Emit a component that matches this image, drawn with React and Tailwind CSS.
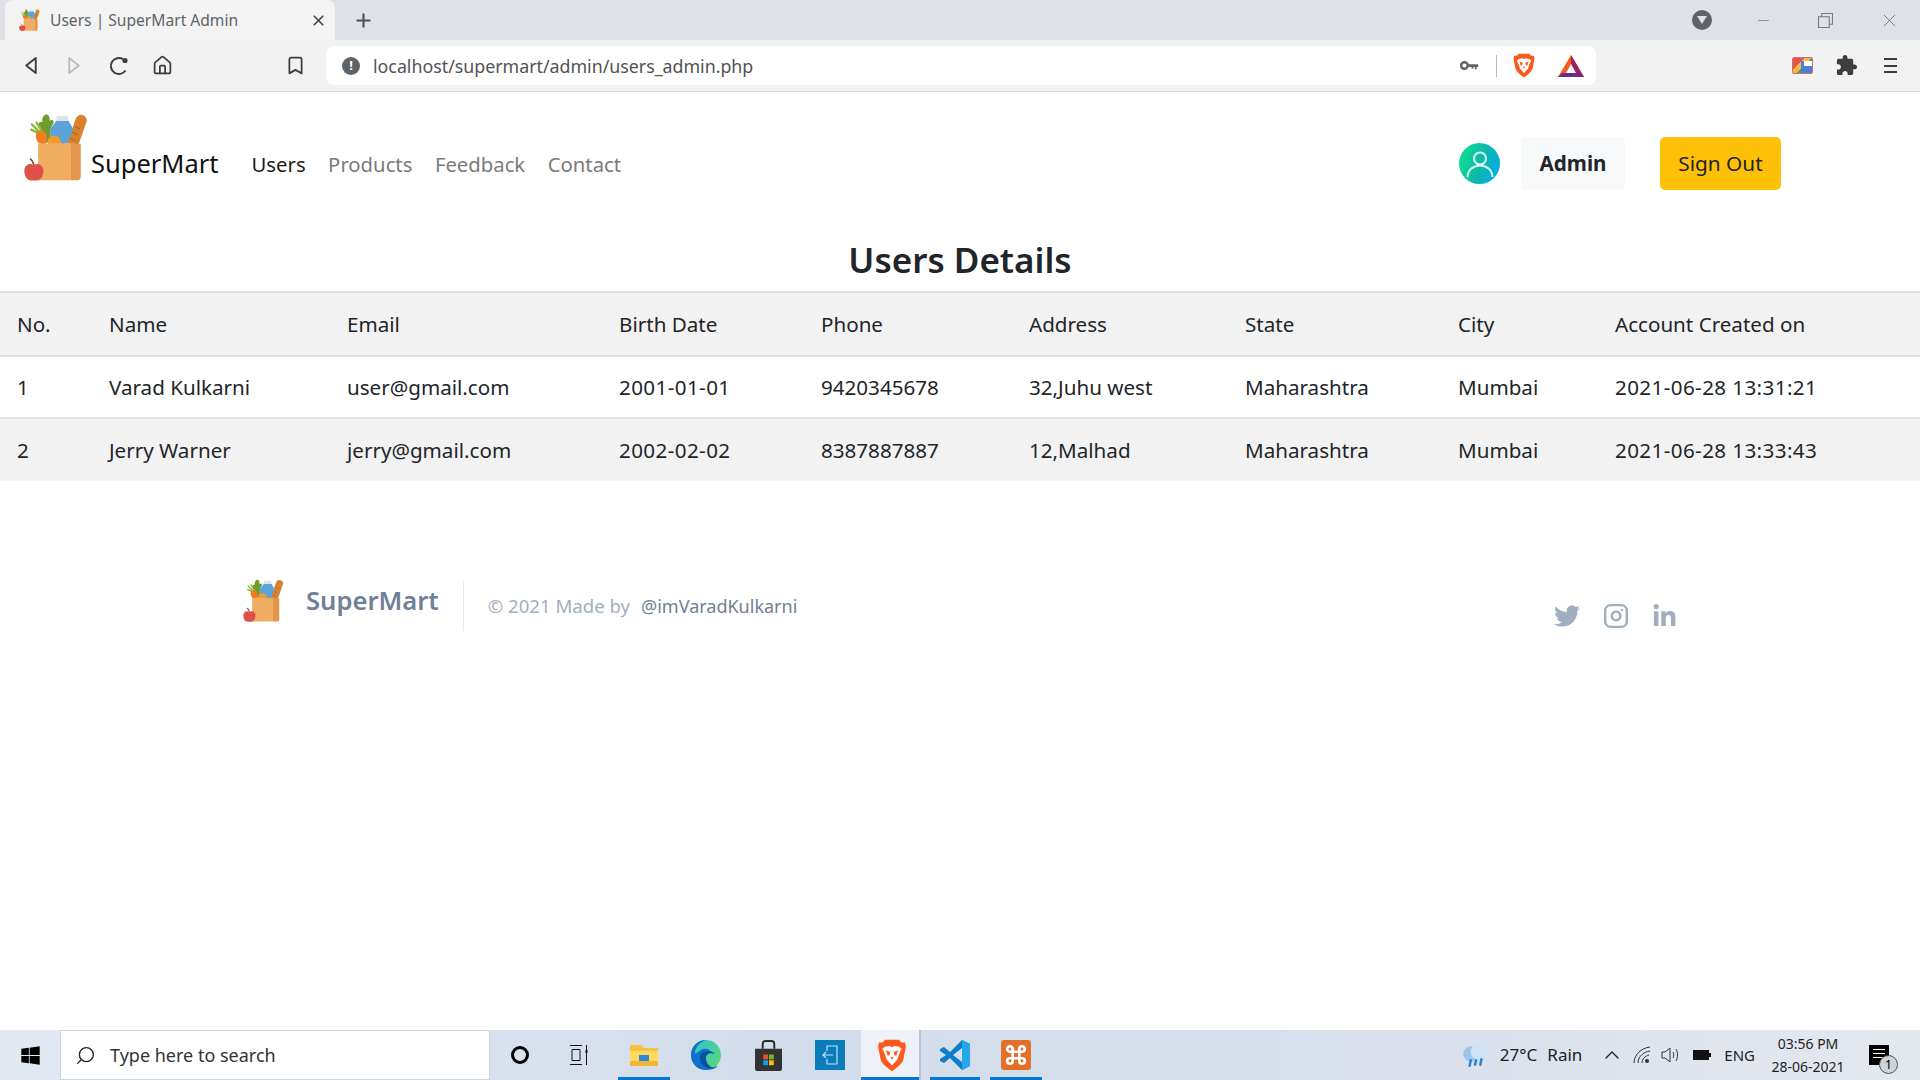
import { House, Bookmark, Search, ChevronUp, X, Plus, Minus } from 'lucide-react';
import { FaTwitter, FaLinkedinIn, FaWindows } from 'react-icons/fa';
import { FiInstagram } from 'react-icons/fi';

const users = [
  ['1', 'Varad Kulkarni', 'user@gmail.com', '2001-01-01', '9420345678', '32,Juhu west', 'Maharashtra', 'Mumbai', '2021-06-28 13:31:21'],
  ['2', 'Jerry Warner', 'jerry@gmail.com', '2002-02-02', '8387887887', '12,Malhad', 'Maharashtra', 'Mumbai', '2021-06-28 13:33:43'],
];
const headers = ['No.', 'Name', 'Email', 'Birth Date', 'Phone', 'Address', 'State', 'City', 'Account Created on'];
const colWidths = ['w-[92px]', 'w-[238px]', 'w-[272px]', 'w-[202px]', 'w-[208px]', 'w-[216px]', 'w-[213px]', 'w-[157px]', 'w-[322px]'];

// grocery bag logo, drawn from the 3x crop
function Logo({ className }) {
  return (
    <svg viewBox="42 38 195 206" className={className}>
      <path d="M192 128 L216 60" stroke="#d8822e" strokeWidth="34" strokeLinecap="round" />
      <path d="M196 78l16 8M189 96l16 8M182 114l14 7" stroke="#bb6a1f" strokeWidth="4" />
      <path d="M140 62 L142 46 L176 46 L178 62 Z" fill="#dfe3e8" />
      <path d="M122 86 L140 62 L178 62 L192 86 L172 136 L122 136 Z" fill="#5ba4da" />
      <path d="M108 42 C118 40 122 52 120 62 C130 54 136 64 130 72 C126 80 122 84 122 92 L122 132 L104 122 C104 104 98 94 90 84 C82 72 88 62 98 66 C96 56 100 44 108 42 Z" fill="#6f9c30" />
      <path d="M66 72 L92 98 M80 66 L96 92 M64 88 L88 100" stroke="#8cb63c" strokeWidth="7" strokeLinecap="round" />
      <path d="M78 104 C82 88 102 88 108 100 C114 112 112 126 110 136 L92 136 C84 126 76 116 78 104 Z" fill="#f47a23" />
      <circle cx="134" cy="126" r="20" fill="#f59a2c" />
      <path d="M85 132 q8 -8 15 0 q8 -8 15 0 q8 -8 15 0 q8 -8 15 0 q8 -8 15 0 q8 -8 15 0 q4 -4 10 -4 L185 242 L85 242 Z" fill="#efad62" />
      <path d="M185 128 q8 -2 15 4 q8 -4 15 0 L215 232 Q215 242 205 242 L185 242 Z" fill="#e2954b" />
      <path d="M72 196 C70 188 68 182 62 178" stroke="#8a4b22" strokeWidth="5" fill="none" strokeLinecap="round" />
      <path d="M72 196 C84 188 100 194 101 212 C102 230 92 243 80 243 L64 243 C52 243 42 230 43 212 C44 194 60 188 72 196 Z" fill="#df5148" />
    </svg>
  );
}

function BraveLogo({ className, face = '#fff' }) {
  return (
    <svg viewBox="0 0 32 38" className={className}>
      <path d="M8 1 L24 1 L27 4 L31 4 L32 9 L29 24 C28 28 20 35 16 37 C12 35 4 28 3 24 L0 9 L1 4 L5 4 Z" fill="#fb5a1c" />
      <path d="M8 9 L13 8 L16 9.5 L19 8 L24 9 L27 11 L24 18 L22 24 L19 27 L16.5 30 L15.5 30 L13 27 L10 24 L8 18 L5 11 Z" fill={face} />
      <path d="M9 13 L14 15 L13 19 L11 19 Z M23 13 L18 15 L19 19 L21 19 Z M14 21 L18 21 L16 24 Z" fill="#fb5a1c" />
    </svg>
  );
}

function Tab() {
  return (
    <div className="ml-[5px] flex h-10 w-[330px] items-center rounded-t-lg bg-[#f3f3f3] pl-[14px] pr-2">
      <Logo className="h-[22px] w-[21px] shrink-0" />
      <span className="ml-[10px] mt-px flex-1 text-[15.6px] text-[#5f6368]">Users | SuperMart Admin</span>
      <X size={17} strokeWidth={2.4} className="text-[#45484c]" />
    </div>
  );
}

function TitleBar() {
  return (
    <div className="flex h-10 items-center bg-[#dee1e6]">
      <Tab />
      <Plus size={21} strokeWidth={2.4} className="ml-[18px] text-[#4d5054]" />
      <div className="flex-1" />
      <div className="flex h-5 w-5 items-center justify-center rounded-full bg-[#5f6368]">
        <svg viewBox="0 0 10 8" className="h-2 w-2.5"><path d="M0 0H10L5 8Z" fill="#dee1e6" /></svg>
      </div>
      <Minus size={17} strokeWidth={1} className="ml-[43px] text-[#6a6d70]" />
      <svg viewBox="0 0 14 14" className="ml-[46px] h-[15px] w-[15px]" fill="none" stroke="#77797c">
        <path d="M.5 3.5h10v10H.5zM3.5 3.5v-3h10v10h-3" />
      </svg>
      <X size={21} strokeWidth={1} className="ml-[46px] mr-[20px] text-[#6a6d70]" />
    </div>
  );
}

function Toolbar() {
  return (
    <div className="flex h-[52px] items-center border-b border-[#d3d3d3] bg-[#f2f2f2]">
      <svg viewBox="0 0 14 20" className="ml-6 h-[19px] w-[14px]" fill="none" stroke="#3d3d3d" strokeWidth="2" strokeLinejoin="round">
        <path d="M12 2 L2 10 L12 18 Z" />
      </svg>
      <svg viewBox="0 0 14 20" className="ml-[29px] h-[19px] w-[14px]" fill="none" stroke="#bdbdbd" strokeWidth="2" strokeLinejoin="round">
        <path d="M2 2 L12 10 L2 18 Z" />
      </svg>
      <svg viewBox="0 0 20 20" className="ml-[28px] h-5 w-5" fill="none" stroke="#3d3d3d" strokeWidth="2">
        <path d="M16.5 14.5 A8 8 0 1 1 14 3.2" />
        <circle cx="16" cy="4.5" r="2.6" fill="#3d3d3d" stroke="none" />
      </svg>
      <House size={21} strokeWidth={2} className="ml-[23px] text-[#3d3d3d]" />
      <Bookmark size={21} strokeWidth={2} className="ml-[112px] text-[#3d3d3d]" />
      <div className="ml-5 flex h-[39px] w-[1270px] items-center rounded-lg bg-white pl-4 pr-3">
        <div className="flex h-[18px] w-[18px] items-center justify-center rounded-full bg-[#5f6368] text-[13px] font-bold leading-none text-white">!</div>
        <span className="ml-[13px] mt-px flex-1 text-[17.8px] text-[#4f5357]">localhost/supermart/admin/users_admin.php</span>
        <svg viewBox="0 0 20 12" className="h-[11px] w-5">
          <circle cx="5" cy="6" r="3.6" fill="none" stroke="#5f6368" strokeWidth="2.6" />
          <path d="M8 4.6h12v3h-1.6v2.6h-2V7.6h-1.6v2h-2v-2H8z" fill="#5f6368" />
        </svg>
        <div className="ml-[17px] h-[22px] w-px bg-[#b9b9b9]" />
        <BraveLogo className="ml-[16px] h-[25px] w-[22px]" />
        <svg viewBox="0 0 26 22" className="ml-[23px] h-[22px] w-[26px]">
          <path d="M13 0 L26 22 H0 Z" fill="#fb5a1c" />
          <path d="M13 0 L26 22 H17 L13 14 Z" fill="#9e1f63" />
          <path d="M0 22 L4 18 H22 L26 22 Z" fill="#662d91" />
          <path d="M13 9 L18 18 H8 Z" fill="#fff" />
        </svg>
      </div>
      <div className="ml-[196px] h-[17px] w-[21px] overflow-hidden rounded-[2px] border border-[#d86b6b] bg-[linear-gradient(135deg,#e0574f_35%,#f2bd42_35%,#f2bd42_55%,#4aa564_55%)]">
        <div className="ml-2 mt-[3px] h-3 w-4 bg-[#4a7fd6]">
          <div className="ml-[3px] mt-[3px] h-[5px] w-2 bg-white" />
        </div>
      </div>
      <svg viewBox="0 0 24 24" className="ml-[22px] h-[23px] w-[23px]" fill="#3d3d3d">
        <path d="M20.5 11H19V7c0-1.1-.9-2-2-2h-4V3.5C13 2.12 11.88 1 10.5 1S8 2.12 8 3.5V5H4c-1.1 0-1.99.9-1.99 2v3.8H3.5c1.49 0 2.7 1.21 2.7 2.7s-1.21 2.7-2.7 2.7H2V20c0 1.1.9 2 2 2h3.8v-1.5c0-1.49 1.21-2.7 2.7-2.7 1.49 0 2.7 1.21 2.7 2.7V22H17c1.1 0 2-.9 2-2v-4h1.5c1.38 0 2.5-1.12 2.5-2.5S21.88 11 20.5 11z" />
      </svg>
      <div className="ml-[26px] flex h-[15px] w-[13px] flex-col justify-between">
        <div className="h-0.5 bg-[#3d3d3d]" />
        <div className="h-0.5 bg-[#3d3d3d]" />
        <div className="h-0.5 bg-[#3d3d3d]" />
      </div>
    </div>
  );
}

function Navbar() {
  return (
    <nav className="flex h-[142px] items-start pl-6">
      <Logo className="mt-[20px] h-[70px] w-[64px] shrink-0" />
      <span className="ml-[3px] mt-[51px] text-[25.5px] leading-[40px] text-[#111]">SuperMart</span>
      <div className="ml-[33px] mt-[53px] flex gap-[22.5px] text-[20.3px] leading-[38px] text-[#7b7b7b]">
        <a className="text-[#1c1c1c]">Users</a>
        <a>Products</a>
        <a>Feedback</a>
        <a>Contact</a>
      </div>
      <div className="flex-1" />
      <div className="mt-[45px] flex items-center">
        <div className="flex h-[41px] w-[41px] items-center justify-center rounded-full bg-[linear-gradient(110deg,#0aea8a,#0fb8a8_50%,#00a8f5)]">
          <svg viewBox="0 0 28 28" className="h-7 w-7" fill="none" stroke="#d8fbf3" strokeWidth="2">
            <circle cx="14" cy="8.5" r="6" />
            <path d="M1.5 27 C2 19 8 15.5 14 15.5 C20 15.5 26 19 26.5 27" />
          </svg>
        </div>
        <button className="ml-[21px] h-[53px] w-[104px] rounded-[5px] bg-[#f8f9fa] text-[20.6px] font-bold text-[#212529]">Admin</button>
        <button className="ml-[35px] mr-[139px] h-[53px] w-[121px] rounded-[5px] bg-[#ffc107] text-[20.8px] text-[#212529]">Sign Out</button>
      </div>
    </nav>
  );
}

function UsersTable() {
  return (
    <table className="w-full table-fixed border-collapse text-[20.6px] text-[#212529]">
      <colgroup>
        {colWidths.map((w) => <col key={w} className={w} />)}
      </colgroup>
      <thead>
        <tr className="h-[64px] border-y-2 border-[#e2e3e8] bg-[#f2f2f2]">
          {headers.map((h) => <th key={h} className="pl-[17px] text-left font-normal">{h}</th>)}
        </tr>
      </thead>
      <tbody>
        {users.map((row, i) => (
          <tr key={row[0]} className={i % 2 ? 'h-[63px] bg-[#f2f2f2]' : 'h-[62px] border-b-2 border-[#e2e3e8]'}>
            {row.map((c, j) => <td key={j} className={j === 3 || j === 8 ? 'pl-[17px] tracking-[0.4px]' : 'pl-[17px]'}>{c}</td>)}
          </tr>
        ))}
      </tbody>
    </table>
  );
}

function Footer() {
  return (
    <footer className="mt-[97px] flex items-start pl-[243px]">
      <Logo className="mt-px h-[43px] w-[41px] shrink-0" />
      <span className="ml-[22px] mt-[4px] text-[25.6px] font-semibold leading-[38px] text-[#718096]">SuperMart</span>
      <div className="ml-6 mt-[3px] h-[50px] w-px bg-[#e2e8f0]" />
      <span className="ml-6 mt-[16px] text-[18.6px] leading-[24px] text-[#a0aec0]">© 2021 Made by</span>
      <span className="ml-[11px] mt-[16px] text-[18px] leading-[24px] text-[#718096]">@imVaradKulkarni</span>
      <div className="flex-1" />
      <div className="mr-[243px] mt-[25px] flex items-center gap-[23px] text-[#a0aec0]">
        <FaTwitter size={26} />
        <FiInstagram size={26} strokeWidth={2.2} />
        <FaLinkedinIn size={25} />
      </div>
    </footer>
  );
}

function TaskbarApp({ children, active, lit, width = 'w-[62px]' }) {
  return (
    <div className={`relative flex h-full ${width} items-center justify-center ${lit ? 'bg-[#eef1f8] pl-1' : ''}`}>
      {children}
      {active && <div className={`absolute bottom-0 h-[3px] bg-[#0078d7] ${lit ? 'inset-x-0' : 'inset-x-[5px]'}`} />}
    </div>
  );
}

function Taskbar() {
  return (
    <div className="flex h-[50px] shrink-0 items-center bg-[linear-gradient(90deg,#e3e9f3,#d3dcea_40%,#d6deeb_65%,#e4e8ef)]">
      <div className="flex w-[60px] justify-center"><FaWindows size={21} className="text-black" /></div>
      <div className="flex h-full w-[430px] items-center border border-[#cfd4da] bg-white pl-[14px]">
        <Search size={21} strokeWidth={1.5} className="-scale-x-100 text-[#222]" />
        <span className="ml-[14px] text-[18px] text-[#333]">Type here to search</span>
      </div>
      <div className="ml-[21px] h-[18px] w-[18px] rounded-full border-[3px] border-black" />
      <svg viewBox="0 0 20 22" className="ml-[40px] h-[22px] w-5" fill="none" stroke="#111" strokeWidth="1">
        <path d="M1 1.5h12M3 5.5h8v11H3zM1 20.5h12M17.5 1v20" />
        <rect x="16.5" y="6" width="2" height="3" fill="#111" stroke="none" />
      </svg>
      <div className="ml-[24px] flex h-full items-center">
        <TaskbarApp active>
          <svg viewBox="0 0 28 24" className="h-6 w-7">
            <path d="M0 2h11l3 3h14v17H0z" fill="#f5c242" />
            <path d="M0 8h28v15H0z" fill="#ffd85e" />
            <path d="M9 12h10v6H9z" fill="#2a8ad4" />
            <path d="M0 18h28v5H0z" fill="#f2b632" />
          </svg>
        </TaskbarApp>
        <TaskbarApp>
          <svg viewBox="0 0 30 30" className="h-[30px] w-[30px]">
            <defs>
              <linearGradient id="edge" x1="0" y1="0" x2="1" y2="1">
                <stop offset="0" stopColor="#2fc3d8" />
                <stop offset="1" stopColor="#5fd86a" />
              </linearGradient>
            </defs>
            <circle cx="15" cy="15" r="15" fill="url(#edge)" />
            <path d="M15 0 C6 0 0 7 0 15 C0 24 7 30 15 30 C19 30 24 29 27 26 C20 29 12 26 12 19 C12 14 17 12 21 13 C19 9 15 8 12 9 C7 11 4 16 4 12 C5 6 9 2 15 0 Z" fill="#0f71c9" />
            <path d="M9 18 C9 25 15 29 22 28 C18 26 15 23 15 18 C15 14 19 12 24 14 C20 9 9 10 9 18 Z" fill="#0b4f9e" />
          </svg>
        </TaskbarApp>
        <TaskbarApp>
          <svg viewBox="0 0 28 32" className="h-[31px] w-[27px]">
            <path d="M8 9V4a3 3 0 0 1 3-3h6a3 3 0 0 1 3 3v5" fill="none" stroke="#2b2b2b" strokeWidth="2" />
            <path d="M0 9h28v21a2 2 0 0 1-2 2H2a2 2 0 0 1-2-2z" fill="#333" />
            <rect x="8.5" y="15" width="5" height="5" fill="#ea4f27" />
            <rect x="14.5" y="15" width="5" height="5" fill="#7db51f" />
            <rect x="8.5" y="21" width="5" height="5" fill="#09a1ec" />
            <rect x="14.5" y="21" width="5" height="5" fill="#ffb900" />
          </svg>
        </TaskbarApp>
        <TaskbarApp>
          <div className="flex h-[30px] w-[30px] items-center justify-center bg-[#0a7cba]">
            <svg viewBox="0 0 16 20" className="h-5 w-4" fill="none" stroke="#bfe3f5" strokeWidth="1.2">
              <path d="M5 6V1h10v18H5v-5M1 10h10M4 7l-3 3 3 3" />
            </svg>
          </div>
        </TaskbarApp>
        <TaskbarApp active lit width="w-[58px]">
          <BraveLogo className="h-[33px] w-[28px]" />
        </TaskbarApp>
        <div className="mr-1 h-full w-0.5 bg-[#b9c4d6]" />
        <TaskbarApp active width="w-[60px]">
          <svg viewBox="0 0 32 32" className="h-8 w-8">
            <path d="M23 1 L31 5 V27 L23 31 L11 19 L5 24 L1 22 V10 L5 8 L11 13 Z" fill="#0f7ec9" />
            <path d="M23 1 L31 5 V27 L23 31 Z" fill="#27a6ec" />
            <path d="M23 9 L14 16 L23 23 Z M1 12 L7 16 L1 20 Z" fill="#d5deec" />
          </svg>
        </TaskbarApp>
        <TaskbarApp active>
          <div className="flex h-[30px] w-[30px] items-center justify-center rounded-[3px] bg-[#e2702a]">
            <svg viewBox="0 0 20 20" className="h-[22px] w-[22px]" fill="none" stroke="#fff" strokeWidth="2.4" strokeLinejoin="round">
              <path d="M7 7 H13 V4.5 a2.5 2.5 0 1 1 2.5 2.5 H13 V13 H15.5 a2.5 2.5 0 1 1 -2.5 2.5 V13 H7 V15.5 a2.5 2.5 0 1 1 -2.5 -2.5 H7 V7 H4.5 a2.5 2.5 0 1 1 2.5 -2.5 Z" />
            </svg>
          </div>
        </TaskbarApp>
      </div>
      <div className="flex-1" />
      <svg viewBox="0 0 28 24" className="h-[26px] w-[30px]">
        <circle cx="10" cy="11" r="7" fill="#9cc5ec" />
        <circle cx="18" cy="9" r="8" fill="#cfe2f6" />
        <path d="M10 17l-1 5M15 17l-1 4M20 16l-1 5" stroke="#2c87d2" strokeWidth="2.4" strokeLinecap="round" />
      </svg>
      <span className="ml-[10px] text-[17px] text-[#222]">27°C</span>
      <span className="ml-[10px] text-[17px] text-[#222]">Rain</span>
      <ChevronUp size={24} strokeWidth={1.4} className="ml-[18px] text-[#222]" />
      <svg viewBox="0 0 18 18" className="ml-[9px] h-[18px] w-[18px]" fill="none" stroke="#333" strokeWidth="1">
        <path d="M1 17C1 9 8 2 17 1M5 17C5 11 10 6 17 5M9 17C9 13 12 10 16 9" />
        <circle cx="14" cy="15" r="2" fill="#333" stroke="none" />
      </svg>
      <svg viewBox="0 0 20 18" className="ml-[10px] h-[18px] w-5" fill="none" stroke="#333" strokeWidth="1">
        <path d="M1 6h3l5-4v14l-5-4H1zM12 6c1 2 1 4 0 6M15 3c2 3 2 9 0 12" />
      </svg>
      <svg viewBox="0 0 18 10" className="ml-[12px] h-2.5 w-[18px]">
        <rect x="0.5" y="0.5" width="15" height="9" fill="#111" stroke="#111" />
        <rect x="16" y="3" width="2" height="4" fill="#111" />
      </svg>
      <span className="ml-[13px] text-[15px] text-[#222]">ENG</span>
      <div className="ml-[14px] flex w-[78px] flex-col items-center whitespace-nowrap text-[14px] leading-[23px] text-[#222]">
        <span>03:56 PM</span>
        <span>28-06-2021</span>
      </div>
      <div className="relative ml-[22px] mr-[31px] h-[20px] w-[20px] bg-black">
        <div className="mx-[4px] mt-[4px] h-px bg-white" />
        <div className="mx-[4px] mt-[3px] h-px bg-white" />
        <div className="mx-[4px] mt-[3px] h-px bg-white" />
        <div className="absolute -bottom-[9px] -right-[9px] flex h-[19px] w-[19px] items-center justify-center rounded-full border border-[#555] bg-[#cfd4da] text-[13px] text-black">1</div>
      </div>
    </div>
  );
}

export default function App() {
  return (
    <div className="flex h-screen flex-col overflow-hidden bg-white font-['Noto_Sans','Open_Sans',sans-serif]">
      <TitleBar />
      <Toolbar />
      <main className="flex-1">
        <Navbar />
        <h1 className="h-[57px] text-center text-[35px] font-semibold leading-[52px] text-[#212529]">Users Details</h1>
        <UsersTable />
        <Footer />
      </main>
      <Taskbar />
    </div>
  );
}
